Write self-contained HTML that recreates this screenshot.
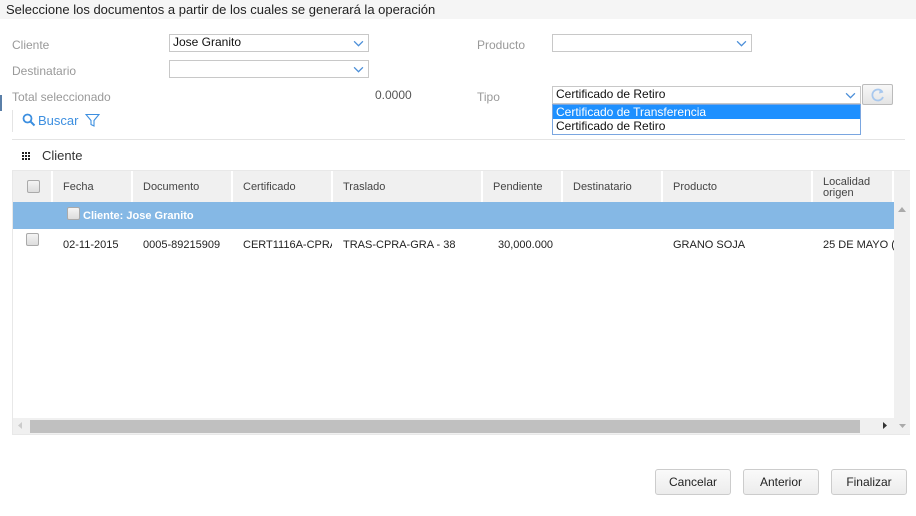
<!DOCTYPE html><html><head><style>
body{margin:0;width:916px;height:516px;background:#fff;font-family:"Liberation Sans",sans-serif;font-size:12px;position:relative;overflow:hidden;color:#222}
.a{position:absolute;white-space:nowrap}
.lbl{color:#999;font-size:12px}
.sel{position:absolute;border:1px solid #c8c8c8;height:17px;background:#fff;box-sizing:border-box;font-size:12px;line-height:15px;padding-left:3px}
.chev{position:absolute;right:4px;top:3px}
.hd{position:absolute;top:171px;height:31px;background:#f0f0f0;border-right:2px solid #fff;box-sizing:border-box;color:#444;font-size:11px;padding-left:10px;line-height:33px}
.cb{position:absolute;width:11px;height:11px;border:1px solid #aaa;border-radius:2px;background:linear-gradient(#f4f4f4,#ddd)}
.btn{position:absolute;top:469px;height:24px;border:1px solid #ccc;border-radius:3px;background:linear-gradient(#fafafa,#ececec);font-size:12px;text-align:center;line-height:24px;color:#222}
.c{position:absolute;top:239px;font-size:11px;color:#222;white-space:nowrap}
</style></head><body>
<div class="a" style="left:0;top:0;width:916px;height:19px;background:#f5f5f5"></div>
<div class="a" style="left:6px;top:2px;font-size:13px;color:#222">Seleccione los documentos a partir de los cuales se generará la operación</div>
<div class="a" style="left:0;top:95px;width:2px;height:16px;background:#5a7fa8"></div>
<div class="a lbl" style="left:12px;top:38px">Cliente</div>
<div class="a lbl" style="left:12px;top:64px">Destinatario</div>
<div class="a lbl" style="left:12px;top:90px">Total seleccionado</div>
<div class="a" style="left:375px;top:88px;color:#555">0.0000</div>
<div class="a lbl" style="left:477px;top:38px">Producto</div>
<div class="a lbl" style="left:477px;top:90px">Tipo</div>
<svg width="0" height="0" style="position:absolute"><defs><symbol id="ch" viewBox="0 0 10 6"><path d="M1 1 L5 5 L9 1" fill="none" stroke="#4a8ed8" stroke-width="1.2"/></symbol></defs></svg>
<div class="sel" style="left:169px;top:34px;width:200px;height:18px;color:#111">Jose Granito<svg class="chev" width="11" height="7" style="top:5px"><use href="#ch"/></svg></div>
<div class="sel" style="left:169px;top:60px;width:200px;height:18px"><svg class="chev" width="11" height="7" style="top:5px"><use href="#ch"/></svg></div>
<div class="sel" style="left:552px;top:34px;width:200px;height:18px"><svg class="chev" width="11" height="7" style="top:5px"><use href="#ch"/></svg></div>
<div class="sel" style="left:552px;top:86px;width:309px;height:18px;color:#111">Certificado de Retiro<svg class="chev" width="11" height="7" style="top:5px"><use href="#ch"/></svg></div>
<div class="a" style="left:862px;top:84px;width:31px;height:21px;border:1px solid #bbb;box-sizing:border-box;background:linear-gradient(#f8f8f8,#e4e4e4);border-radius:2px"><svg width="16" height="16" style="position:absolute;left:7px;top:2px" viewBox="0 0 16 16"><path d="M12.5 5A5.5 5.5 0 1 0 13 10" fill="none" stroke="#a8c8ee" stroke-width="1.8"/><path d="M10 2 L13.5 5.5 L9 6.5Z" fill="#a8c8ee"/></svg></div>
<div class="a" style="left:552px;top:104px;width:309px;height:31px;border:1px solid #7aa6e0;box-sizing:border-box;background:#fff"></div>
<div class="a" style="left:553px;top:105px;width:307px;height:14px;background:#1e90ff;color:#fff;font-size:12px;line-height:14px;padding-left:3px;box-sizing:border-box">Certificado de Transferencia</div>
<div class="a" style="left:556px;top:119px;font-size:12px;color:#111">Certificado de Retiro</div>
<div class="a" style="left:12px;top:110px;width:1px;height:22px;background:#e4e4e4"></div>
<svg class="a" style="left:22px;top:113px" width="14" height="14" viewBox="0 0 14 14"><circle cx="5.5" cy="5.5" r="4" fill="none" stroke="#3d8fe0" stroke-width="1.8"/><path d="M8.5 8.5L12.5 12.5" stroke="#3d8fe0" stroke-width="2"/></svg>
<div class="a" style="left:38px;top:113px;color:#3d8fe0;font-size:13px">Buscar</div>
<svg class="a" style="left:85px;top:113px" width="15" height="15" viewBox="0 0 15 15"><path d="M1 1.5H14L9 7.5V13L6 11.5V7.5Z" fill="none" stroke="#3d8fe0" stroke-width="1.1"/></svg>
<div class="a" style="left:12px;top:139px;width:893px;height:1px;background:#e4e4e4"></div>
<svg class="a" style="left:22px;top:152px" width="8" height="8" viewBox="0 0 8 8" fill="#222"><rect x="0" y="0" width="2" height="2"/><rect x="3" y="0" width="2" height="2"/><rect x="6" y="0" width="2" height="2"/><rect x="0" y="3" width="2" height="2"/><rect x="3" y="3" width="2" height="2"/><rect x="6" y="3" width="2" height="2"/><rect x="0" y="6" width="2" height="2"/><rect x="3" y="6" width="2" height="2"/><rect x="6" y="6" width="2" height="2"/></svg>
<div class="a" style="left:42px;top:148px;font-size:13px;color:#333">Cliente</div>
<div class="a" style="left:12px;top:170px;width:898px;height:265px;border:1px solid #e8e8e8;box-sizing:border-box"></div>
<div class="hd" style="left:13px;width:40px"></div>
<div class="cb" style="left:27px;top:180px"></div>
<div class="hd" style="left:53px;width:80px">Fecha</div>
<div class="hd" style="left:133px;width:100px">Documento</div>
<div class="hd" style="left:233px;width:100px">Certificado</div>
<div class="hd" style="left:333px;width:150px">Traslado</div>
<div class="hd" style="left:483px;width:80px">Pendiente</div>
<div class="hd" style="left:563px;width:100px">Destinatario</div>
<div class="hd" style="left:663px;width:150px">Producto</div>
<div class="hd" style="left:813px;width:81px;line-height:11px;padding-top:6px">Localidad<br>origen</div>
<div class="hd" style="left:894px;width:16px;border:none"></div>
<div class="a" style="left:13px;top:202px;width:881px;height:27px;background:#85b8e5"></div>
<div class="cb" style="left:67px;top:207px"></div>
<div class="a" style="left:83px;top:210px;color:#fff;font-size:11px;font-weight:bold">Cliente: Jose Granito</div>
<div class="a" style="left:894px;top:202px;width:16px;height:216px;background:#f0f0f0"></div>
<svg class="a" style="left:898px;top:207px" width="8" height="5"><path d="M0 5L4 0L8 5Z" fill="#aaa"/></svg>
<div class="cb" style="left:26px;top:233px"></div>
<div class="c" style="left:63px">02-11-2015</div>
<div class="c" style="left:143px">0005-89215909</div>
<div class="c" style="left:243px;width:89px;overflow:hidden">CERT1116A-CPRA</div>
<div class="c" style="left:343px">TRAS-CPRA-GRA - 38</div>
<div class="c" style="left:498px">30,000.000</div>
<div class="c" style="left:673px">GRANO SOJA</div>
<div class="c" style="left:823px;width:71px;overflow:hidden">25 DE MAYO (2</div>
<div class="a" style="left:13px;top:418px;width:897px;height:16px;background:#f0f0f0"></div>
<div class="a" style="left:30px;top:420px;width:830px;height:13px;background:#c0c0c0"></div>
<svg class="a" style="left:18px;top:422px" width="4" height="7"><path d="M4 0L0 3.5L4 7Z" fill="#ccc"/></svg>
<svg class="a" style="left:883px;top:422px" width="4" height="7"><path d="M0 0L4 3.5L0 7Z" fill="#333"/></svg>
<svg class="a" style="left:899px;top:424px" width="7" height="4"><path d="M0 0L7 0L3.5 4Z" fill="#aaa"/></svg>
<div class="btn" style="left:655px;width:74px">Cancelar</div>
<div class="btn" style="left:743px;width:74px">Anterior</div>
<div class="btn" style="left:831px;width:74px">Finalizar</div>
</body></html>
